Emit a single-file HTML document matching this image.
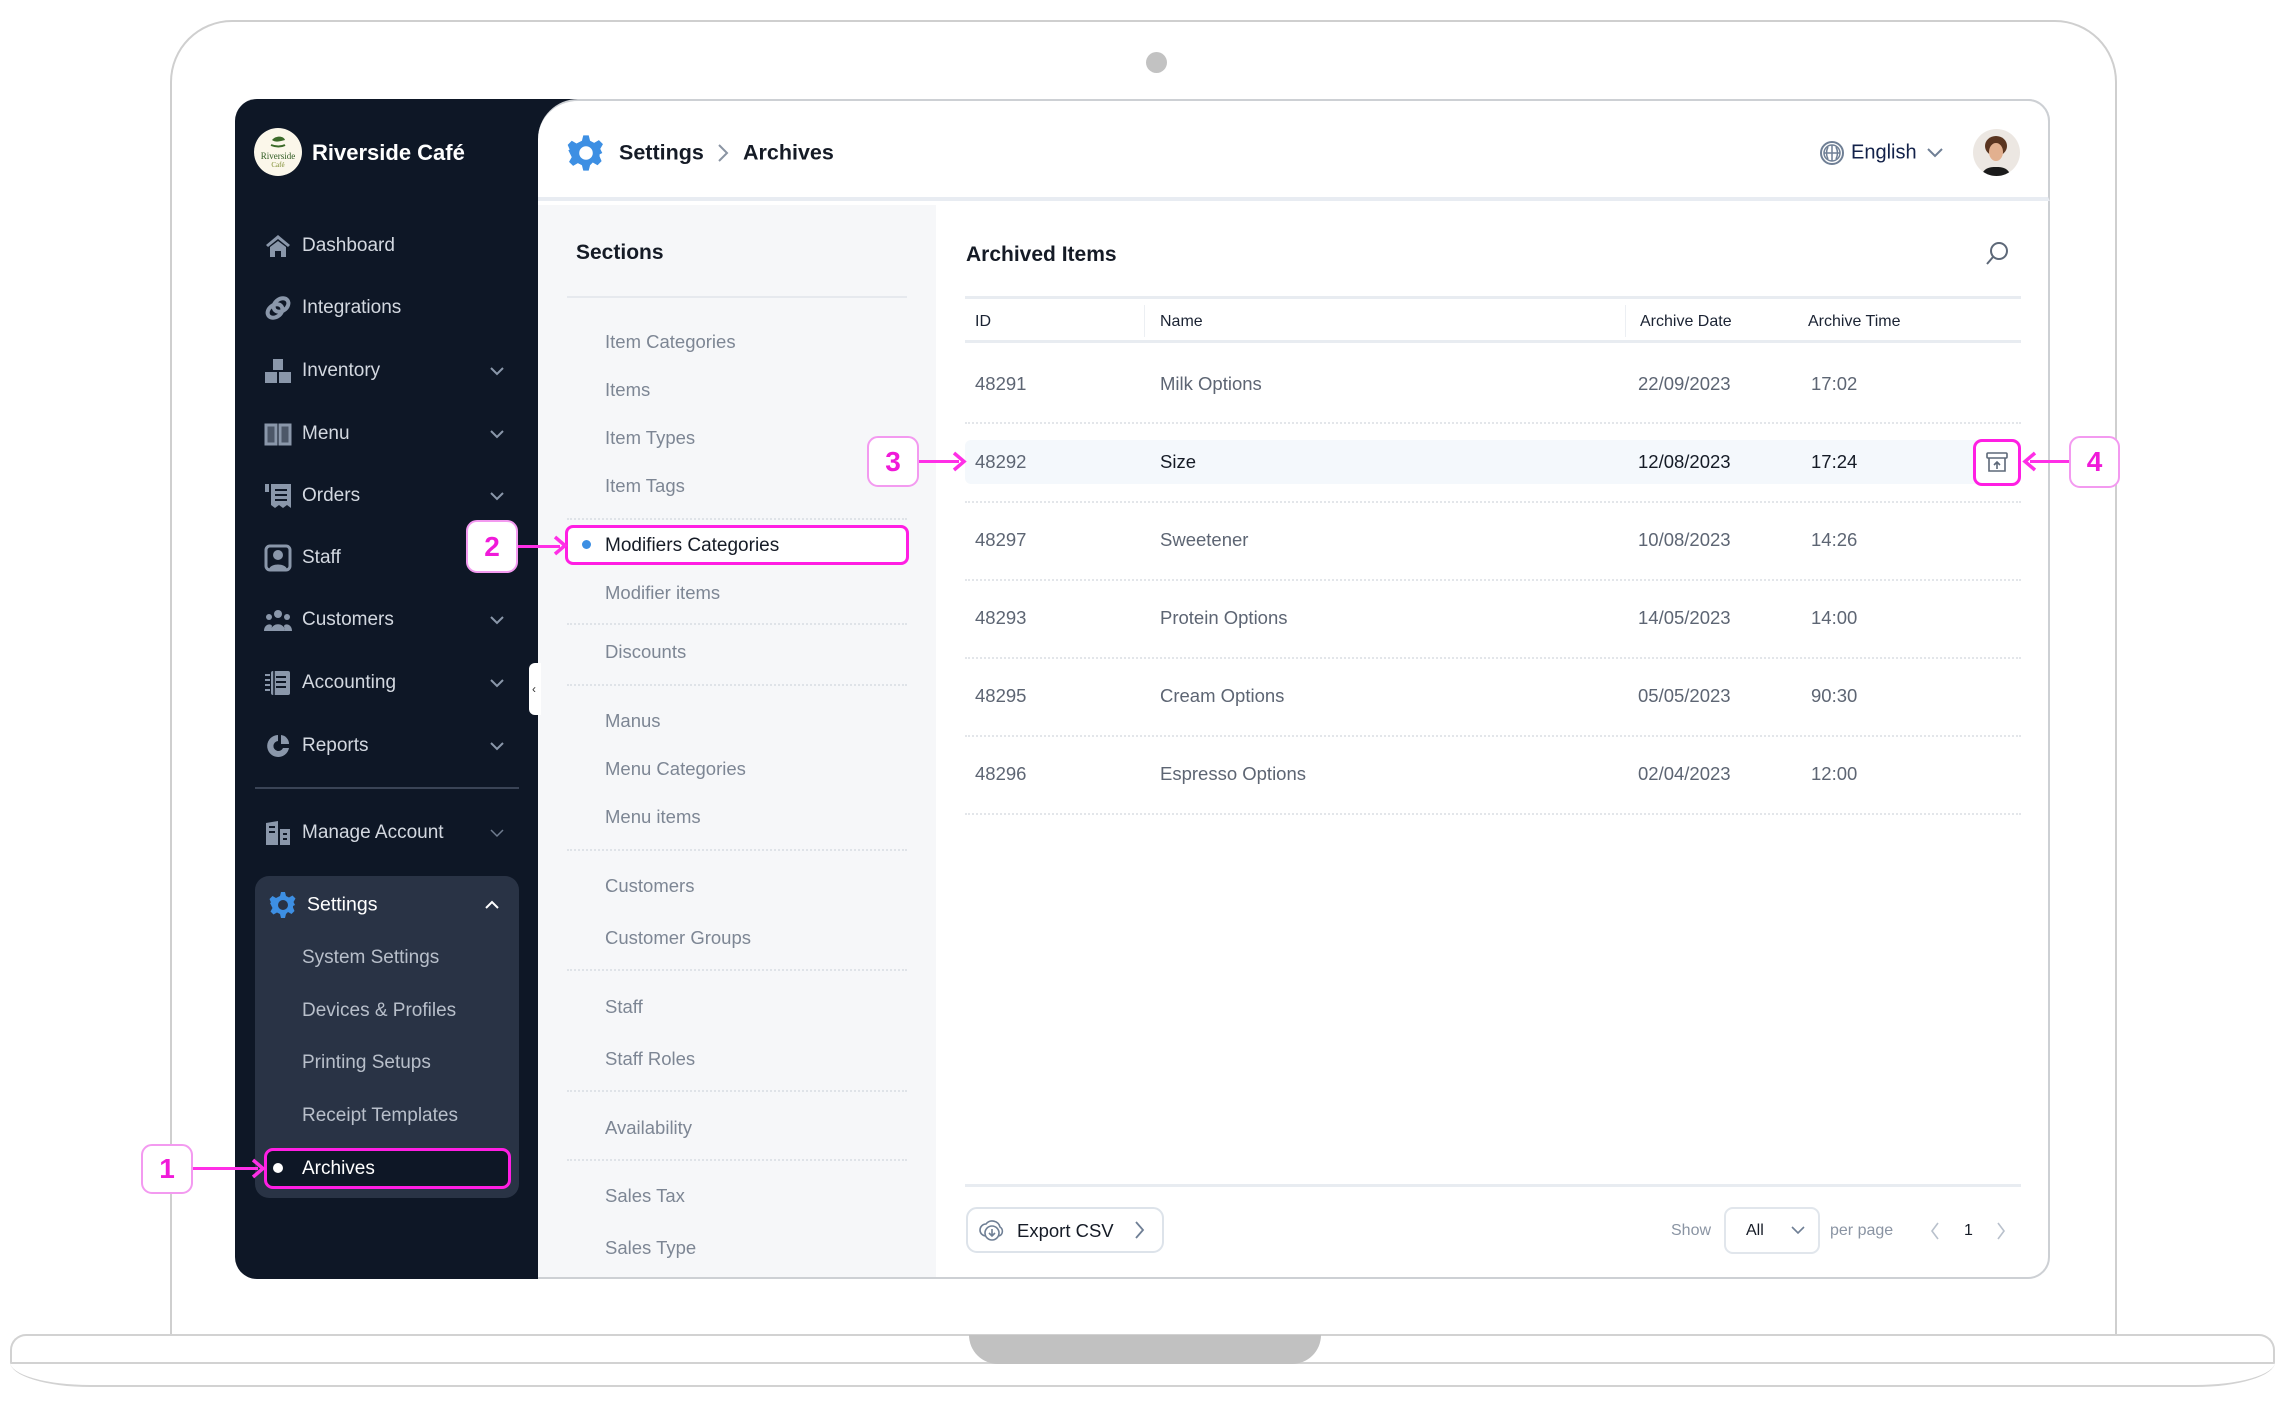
<!DOCTYPE html>
<html><head><meta charset="utf-8"><style>
*{margin:0;padding:0;box-sizing:border-box}
body{width:2285px;height:1408px;background:#fff;position:relative;overflow:hidden;font-family:"Liberation Sans",sans-serif}
.a{position:absolute}
.t{position:absolute;white-space:nowrap;transform:translateY(-50%)}
.nav{color:#d3d8e0;font-size:19px;left:302px}
.ic{position:absolute;left:264px;width:28px;height:28px;transform:translateY(-50%)}
.chev{position:absolute;left:489px;width:16px;height:10px;transform:translateY(-50%)}
.sec{color:#7d8694;font-size:18.5px;left:605px}
.dot{position:absolute;left:567px;width:340px;border-top:2px dotted #dfe3e8}
.rdot{position:absolute;left:965px;width:1056px;border-top:2px dotted #e3e6ea}
.cell{color:#5d6573;font-size:18.5px}
.lbl{position:absolute;border:2.5px solid #f39af0;border-radius:11px;background:#fff;color:#f01ad9;font-weight:bold;font-size:28px;display:flex;align-items:center;justify-content:center}
.arr{position:absolute;height:3px;background:#ff2fe6}
</style></head><body>

<!-- laptop -->
<div class="a" style="left:170px;top:20px;width:1947px;height:1330px;border:2px solid #cfcfcf;border-bottom:none;border-radius:62px 62px 0 0"></div>
<div class="a" style="left:1146px;top:52px;width:21px;height:21px;border-radius:50%;background:#c2c2c2"></div>
<div class="a" style="left:10px;top:1334px;width:2265px;height:29px;border:2px solid #d2d2d2;border-bottom:none;border-radius:16px 16px 0 0;background:#fff"></div>
<div class="a" style="left:10px;top:1362px;width:2265px;height:25px;border-bottom:2px solid #d2d2d2;border-radius:0 0 80px 80px/0 0 25px 25px;border-top:2px solid #d2d2d2"></div>
<div class="a" style="left:969px;top:1335px;width:352px;height:29px;background:#c1c1c1;border-radius:0 0 30px 30px"></div>

<!-- screen -->
<div class="a" style="left:235px;top:99px;width:1815px;height:1180px;border:2px solid #cdd0d4;border-radius:22px;overflow:hidden;background:#fff">
</div>
<div class="a" style="left:235px;top:99px;width:303px;height:1180px;background:#0e1726;border-radius:22px 0 0 22px"></div>
<div class="a" style="left:536px;top:99px;width:50px;height:50px;background:#0e1726"></div>
<div class="a" style="left:538px;top:99px;width:1512px;height:102px;background:#fff;border-radius:40px 22px 0 0;border-bottom:4px solid #e8ecf2;border-top:2px solid #cdd0d4;border-right:2px solid #cdd0d4"></div>
<div class="a" style="left:538px;top:205px;width:398px;height:1072px;background:#f6f7f9"></div>
<div class="a" style="left:529px;top:663px;width:12px;height:52px;background:#fff;border-radius:6px 0 0 6px"></div>
<div class="t" style="left:532px;top:689px;font-size:12px;color:#333">‹</div>

<!-- sidebar -->
<div class="a" style="left:254px;top:128px;width:48px;height:48px;border-radius:50%;background:#fbf7ea;overflow:hidden">
<svg width="48" height="48"><path d="M18 12c4-5 12-4 13 0-4 1-9 3-13 0z" fill="#3c6b2a"/><path d="M17 17c5 2 10 2 14 0" stroke="#3c6b2a" stroke-width="2" fill="none"/><text x="24" y="31" font-size="9" text-anchor="middle" fill="#2f5b22" font-family="Liberation Serif">Riverside</text><text x="24" y="39" font-size="7" text-anchor="middle" fill="#7a8a2a" font-family="Liberation Serif">Café</text></svg></div>
<div class="t" style="left:312px;top:153px;color:#fff;font-size:22px;font-weight:bold">Riverside Café</div>

<svg class="ic" style="top:246px" viewBox="0 0 28 28"><path d="M2 13L14 3l12 10-2 2-10-8-10 8z M6 15l8-6 8 6v10h-5v-6h-6v6H6z" fill="#8a97aa"/></svg>
<div class="t nav" style="top:246px">Dashboard</div>
<svg class="ic" style="top:308px" viewBox="0 0 28 28"><ellipse cx="11" cy="17" rx="8" ry="6" transform="rotate(-35 11 17)" stroke="#8a97aa" stroke-width="4" fill="none"/><ellipse cx="17" cy="11" rx="8" ry="6" transform="rotate(-35 17 11)" stroke="#8a97aa" stroke-width="4" fill="none"/></svg>
<div class="t nav" style="top:308px">Integrations</div>
<svg class="ic" style="top:371px" viewBox="0 0 28 28"><rect x="9" y="2" width="10" height="11" fill="#8a97aa"/><rect x="1" y="15" width="12" height="11" fill="#8a97aa"/><rect x="15" y="15" width="12" height="11" fill="#8a97aa"/></svg>
<div class="t nav" style="top:371px">Inventory</div>
<svg class="chev" style="top:371px" viewBox="0 0 16 10"><path d="M2 2l6 6 6-6" stroke="#8a97aa" stroke-width="2" fill="none"/></svg>
<svg class="ic" style="top:434px" viewBox="0 0 28 28"><path d="M2 5h10v19H2z M16 5h10v19H16z" stroke="#8a97aa" stroke-width="3" fill="#8a97aa" fill-opacity=".5"/></svg>
<div class="t nav" style="top:434px">Menu</div>
<svg class="chev" style="top:434px" viewBox="0 0 16 10"><path d="M2 2l6 6 6-6" stroke="#8a97aa" stroke-width="2" fill="none"/></svg>
<svg class="ic" style="top:496px" viewBox="0 0 28 28"><rect x="1" y="2" width="4" height="8" fill="#8a97aa"/><path d="M7 2h20v24l-4-3-4 3-4-3-4 3-4-3z" fill="#8a97aa"/><path d="M11 8h12M11 13h12M11 18h12" stroke="#0e1726" stroke-width="2"/></svg>
<div class="t nav" style="top:496px">Orders</div>
<svg class="chev" style="top:496px" viewBox="0 0 16 10"><path d="M2 2l6 6 6-6" stroke="#8a97aa" stroke-width="2" fill="none"/></svg>
<svg class="ic" style="top:558px" viewBox="0 0 28 28"><rect x="2" y="2" width="24" height="24" rx="4" stroke="#8a97aa" stroke-width="3" fill="none"/><circle cx="14" cy="11" r="5" fill="#8a97aa"/><path d="M5 25c2-6 16-6 18 0z" fill="#8a97aa"/></svg>
<div class="t nav" style="top:558px">Staff</div>
<svg class="ic" style="top:620px" viewBox="0 0 28 28"><circle cx="14" cy="8" r="4" fill="#8a97aa"/><circle cx="5" cy="11" r="3" fill="#8a97aa"/><circle cx="23" cy="11" r="3" fill="#8a97aa"/><path d="M7 25c0-9 14-9 14 0zM0 25c0-7 7-8 8-5l-1 5zM28 25c0-7-7-8-8-5l1 5z" fill="#8a97aa"/></svg>
<div class="t nav" style="top:620px">Customers</div>
<svg class="chev" style="top:620px" viewBox="0 0 16 10"><path d="M2 2l6 6 6-6" stroke="#8a97aa" stroke-width="2" fill="none"/></svg>
<svg class="ic" style="top:683px" viewBox="0 0 28 28"><rect x="7" y="2" width="19" height="24" rx="2" fill="#8a97aa"/><path d="M1 6h5M1 11h5M1 16h5M1 21h5" stroke="#8a97aa" stroke-width="2"/><path d="M12 8h10M12 13h10M12 18h10" stroke="#0e1726" stroke-width="2"/><path d="M10 2v24" stroke="#0e1726" stroke-width="1.5"/></svg>
<div class="t nav" style="top:683px">Accounting</div>
<svg class="chev" style="top:683px" viewBox="0 0 16 10"><path d="M2 2l6 6 6-6" stroke="#8a97aa" stroke-width="2" fill="none"/></svg>
<svg class="ic" style="top:746px" viewBox="0 0 28 28"><path d="M14 3A11 11 0 1 0 25 16h-6a5 5 0 1 1-5-7z" fill="#8a97aa"/><path d="M17 3a9 9 0 0 1 8 9h-8z" fill="#8a97aa"/></svg>
<div class="t nav" style="top:746px">Reports</div>
<svg class="chev" style="top:746px" viewBox="0 0 16 10"><path d="M2 2l6 6 6-6" stroke="#8a97aa" stroke-width="2" fill="none"/></svg>

<div class="a" style="left:255px;top:787px;width:264px;height:2px;background:#3a4456"></div>
<svg class="ic" style="top:833px" viewBox="0 0 28 28"><path d="M2 4l12-2v24H2z" fill="#8a97aa"/><path d="M16 10h10v16H16z" fill="#8a97aa"/><path d="M5 8h6M5 13h6M19 15h4M19 20h4" stroke="#0e1726" stroke-width="2"/></svg>
<div class="t nav" style="top:833px">Manage Account</div>
<svg class="chev" style="top:833px" viewBox="0 0 16 10"><path d="M2 2l6 6 6-6" stroke="#6f7c8f" stroke-width="1.5" fill="none"/></svg>

<div class="a" style="left:255px;top:876px;width:264px;height:322px;background:#293345;border-radius:14px"></div>
<svg class="a" style="left:269px;top:891px" width="28" height="28" viewBox="0 0 28 28"><path d="M12 1h4l1 4 3 1.5 3.5-2 3 3-2 3.5L26 14l-2 1-0 1.5 1.5 3.5-3 3-3.5-2L17 23l-1 4h-4l-1-4-3-1.5-3.5 2-3-3 2-3.5L2 14l-1-2 1-0.5L0.5 8l3-3 3.5 2L11 5z" fill="#3d8fe3"/><circle cx="14" cy="14" r="5" fill="#293345"/></svg>
<div class="t" style="left:307px;top:905px;color:#fff;font-size:19.5px">Settings</div>
<svg class="chev" style="top:905px;left:484px" viewBox="0 0 16 10"><path d="M2 8l6-6 6 6" stroke="#fff" stroke-width="2" fill="none"/></svg>
<div class="t nav" style="top:958px;color:#b8bfca">System Settings</div>
<div class="t nav" style="top:1011px;color:#b8bfca">Devices &amp; Profiles</div>
<div class="t nav" style="top:1063px;color:#b8bfca">Printing Setups</div>
<div class="t nav" style="top:1116px;color:#b8bfca">Receipt Templates</div>
<div class="a" style="left:264px;top:1148px;width:247px;height:41px;background:#0e1726;border:3px solid #ff1ee3;border-radius:9px"></div>
<div class="a" style="left:273px;top:1163px;width:10px;height:10px;border-radius:50%;background:#fff"></div>
<div class="t" style="left:302px;top:1169px;color:#fff;font-size:19px">Archives</div>

<!-- header -->
<svg class="a" style="left:567px;top:134px" width="38" height="38" viewBox="0 0 28 28"><path d="M12 1h4l1 4 3 1.5 3.5-2 3 3-2 3.5L26 14l-2 1-0 1.5 1.5 3.5-3 3-3.5-2L17 23l-1 4h-4l-1-4-3-1.5-3.5 2-3-3 2-3.5L2 14l-1-2 1-0.5L0.5 8l3-3 3.5 2L11 5z" fill="#3d8fe3"/><circle cx="14" cy="14" r="5" fill="#fff"/></svg>
<div class="t" style="left:619px;top:153px;font-size:21.5px;font-weight:bold;color:#151b26">Settings</div>
<svg class="a" style="left:716px;top:143px" width="14" height="20"><path d="M3 2l8 8-8 8" stroke="#8a94a3" stroke-width="2" fill="none"/></svg>
<div class="t" style="left:743px;top:153px;font-size:21.5px;font-weight:bold;color:#151b26">Archives</div>
<svg class="a" style="left:1819px;top:140px" width="26" height="26" viewBox="0 0 26 26"><circle cx="13" cy="13" r="11" stroke="#6f7f95" stroke-width="2" fill="none"/><circle cx="13" cy="13" r="8" stroke="#6f7f95" stroke-width="1.5" fill="none"/><path d="M5 13h16M13 5v16M9 7c-2 4-2 8 0 12M17 7c2 4 2 8 0 12" stroke="#6f7f95" stroke-width="1.5" fill="none"/></svg>
<div class="t" style="left:1851px;top:153px;font-size:20px;color:#13224a">English</div>
<svg class="a" style="left:1926px;top:147px" width="18" height="12"><path d="M2 2l7 7 7-7" stroke="#6f7f95" stroke-width="2" fill="none"/></svg>
<div class="a" style="left:1973px;top:129px;width:47px;height:47px;border-radius:50%;background:#ece7e2;overflow:hidden">
<svg width="47" height="47"><ellipse cx="23" cy="17" rx="11" ry="10" fill="#5a3520"/><ellipse cx="23" cy="23" rx="7" ry="9" fill="#e2b08f"/><path d="M8 47c3-8 8-9 15-9s12 1 15 9z" fill="#1b1b1b"/></svg></div>

<!-- sections -->
<div class="t" style="left:576px;top:253px;font-size:21px;font-weight:bold;color:#151b26">Sections</div>
<div class="a" style="left:567px;top:296px;width:340px;height:2px;background:#e6e9ee"></div>
<div class="t sec" style="top:342px">Item Categories</div>
<div class="t sec" style="top:390px">Items</div>
<div class="t sec" style="top:438px">Item Types</div>
<div class="t sec" style="top:486px">Item Tags</div>
<div class="dot" style="top:518px"></div>
<div class="a" style="left:565px;top:525px;width:344px;height:40px;background:#fff;border:3px solid #ff1ee3;border-radius:8px"></div>
<div class="a" style="left:582px;top:540px;width:9px;height:9px;border-radius:50%;background:#3d8fe3"></div>
<div class="t" style="left:605px;top:546px;font-size:19px;color:#151b26">Modifiers Categories</div>
<div class="t sec" style="top:593px">Modifier items</div>
<div class="dot" style="top:623px"></div>
<div class="t sec" style="top:652px">Discounts</div>
<div class="dot" style="top:684px"></div>
<div class="t sec" style="top:721px">Manus</div>
<div class="t sec" style="top:769px">Menu Categories</div>
<div class="t sec" style="top:817px">Menu items</div>
<div class="dot" style="top:849px"></div>
<div class="t sec" style="top:886px">Customers</div>
<div class="t sec" style="top:938px">Customer Groups</div>
<div class="dot" style="top:969px"></div>
<div class="t sec" style="top:1007px">Staff</div>
<div class="t sec" style="top:1059px">Staff Roles</div>
<div class="dot" style="top:1090px"></div>
<div class="t sec" style="top:1128px">Availability</div>
<div class="dot" style="top:1159px"></div>
<div class="t sec" style="top:1196px">Sales Tax</div>
<div class="t sec" style="top:1248px">Sales Type</div>

<!-- content -->
<div class="t" style="left:966px;top:255px;font-size:21px;font-weight:bold;color:#151b26">Archived Items</div>
<svg class="a" style="left:1984px;top:240px" width="26" height="28"><circle cx="15" cy="11" r="8" stroke="#5d6878" stroke-width="2" fill="none"/><path d="M9 17l-6 7" stroke="#5d6878" stroke-width="2"/></svg>
<div class="a" style="left:965px;top:296px;width:1056px;height:3px;background:#e8ecf1"></div>
<div class="a" style="left:1144px;top:305px;width:1px;height:32px;background:#eceff3"></div>
<div class="a" style="left:1625px;top:305px;width:1px;height:32px;background:#eceff3"></div>
<div class="t" style="left:975px;top:322px;font-size:16px;color:#1b2333">ID</div>
<div class="t" style="left:1160px;top:322px;font-size:16px;color:#1b2333">Name</div>
<div class="t" style="left:1640px;top:322px;font-size:16px;color:#1b2333">Archive Date</div>
<div class="t" style="left:1808px;top:322px;font-size:16px;color:#1b2333">Archive Time</div>
<div class="a" style="left:965px;top:340px;width:1056px;height:3px;background:#e8ecf1"></div>

<div class="a" style="left:965px;top:440px;width:1056px;height:44px;background:#f4f8fc;border-radius:6px"></div>

<div class="t cell" style="left:975px;top:384px">48291</div><div class="t cell" style="left:1160px;top:384px">Milk Options</div><div class="t cell" style="left:1638px;top:384px">22/09/2023</div><div class="t cell" style="left:1811px;top:384px">17:02</div>
<div class="rdot" style="top:422px"></div>
<div class="t cell" style="left:975px;top:462px">48292</div><div class="t cell" style="left:1160px;top:462px;color:#151b26">Size</div><div class="t cell" style="left:1638px;top:462px;color:#151b26">12/08/2023</div><div class="t cell" style="left:1811px;top:462px;color:#151b26">17:24</div>
<div class="rdot" style="top:501px"></div>
<div class="t cell" style="left:975px;top:540px">48297</div><div class="t cell" style="left:1160px;top:540px">Sweetener</div><div class="t cell" style="left:1638px;top:540px">10/08/2023</div><div class="t cell" style="left:1811px;top:540px">14:26</div>
<div class="rdot" style="top:579px"></div>
<div class="t cell" style="left:975px;top:618px">48293</div><div class="t cell" style="left:1160px;top:618px">Protein Options</div><div class="t cell" style="left:1638px;top:618px">14/05/2023</div><div class="t cell" style="left:1811px;top:618px">14:00</div>
<div class="rdot" style="top:657px"></div>
<div class="t cell" style="left:975px;top:696px">48295</div><div class="t cell" style="left:1160px;top:696px">Cream Options</div><div class="t cell" style="left:1638px;top:696px">05/05/2023</div><div class="t cell" style="left:1811px;top:696px">90:30</div>
<div class="rdot" style="top:735px"></div>
<div class="t cell" style="left:975px;top:774px">48296</div><div class="t cell" style="left:1160px;top:774px">Espresso Options</div><div class="t cell" style="left:1638px;top:774px">02/04/2023</div><div class="t cell" style="left:1811px;top:774px">12:00</div>
<div class="rdot" style="top:813px"></div>

<div class="a" style="left:1973px;top:439px;width:48px;height:47px;border:3px solid #ff1ee3;border-radius:9px;background:#fff"></div>
<svg class="a" style="left:1985px;top:450px" width="24" height="24"><rect x="2" y="3" width="20" height="5" rx="1" stroke="#5d6878" stroke-width="1.6" fill="none"/><path d="M4 8v13h16V8M12 19v-7M9 15l3-3 3 3" stroke="#5d6878" stroke-width="1.6" fill="none"/></svg>

<div class="a" style="left:965px;top:1184px;width:1056px;height:3px;background:#e8ecf1"></div>
<div class="a" style="left:966px;top:1207px;width:198px;height:46px;border:2px solid #dde3ea;border-radius:11px"></div>
<svg class="a" style="left:979px;top:1217px" width="26" height="26"><path d="M7 19a6 6 0 0 1 0-12 8 8 0 0 1 14 3 5 5 0 0 1-1 9" stroke="#6f7f95" stroke-width="1.6" fill="none"/><circle cx="13" cy="16" r="7" stroke="#6f7f95" stroke-width="1.6" fill="#fff"/><path d="M13 12v7M10 16l3 3 3-3" stroke="#6f7f95" stroke-width="1.6" fill="none"/></svg>
<div class="t" style="left:1017px;top:1231px;font-size:18.5px;color:#151b26">Export CSV</div>
<svg class="a" style="left:1134px;top:1220px" width="12" height="20"><path d="M2 2l7 8-7 8" stroke="#6f7f95" stroke-width="1.8" fill="none"/></svg>
<div class="t" style="left:1671px;top:1231px;font-size:16px;color:#8a94a3">Show</div>
<div class="a" style="left:1724px;top:1207px;width:96px;height:47px;border:2px solid #e1e6ec;border-radius:9px"></div>
<div class="t" style="left:1746px;top:1231px;font-size:16px;color:#151b26">All</div>
<svg class="a" style="left:1790px;top:1225px" width="16" height="10"><path d="M2 2l6 6 6-6" stroke="#6f7f95" stroke-width="1.6" fill="none"/></svg>
<div class="t" style="left:1830px;top:1231px;font-size:16px;color:#8a94a3">per page</div>
<svg class="a" style="left:1929px;top:1221px" width="12" height="20"><path d="M9 2l-6 8 6 8" stroke="#b9c1cc" stroke-width="1.6" fill="none"/></svg>
<div class="t" style="left:1964px;top:1231px;font-size:16px;color:#151b26">1</div>
<svg class="a" style="left:1995px;top:1221px" width="12" height="20"><path d="M3 2l6 8-6 8" stroke="#b9c1cc" stroke-width="1.6" fill="none"/></svg>

<!-- annotations -->
<div class="lbl" style="left:141px;top:1144px;width:52px;height:50px">1</div>
<div class="arr" style="left:193px;top:1167px;width:65px"></div>
<svg class="a" style="left:250px;top:1158px" width="16" height="21"><path d="M3 2l10 8.5-10 8.5" stroke="#ff2fe6" stroke-width="3.5" fill="none"/></svg>
<div class="lbl" style="left:466px;top:520px;width:52px;height:53px">2</div>
<div class="arr" style="left:518px;top:545px;width:42px"></div>
<svg class="a" style="left:552px;top:535px" width="16" height="21"><path d="M3 2l10 8.5-10 8.5" stroke="#ff2fe6" stroke-width="3.5" fill="none"/></svg>
<div class="lbl" style="left:867px;top:436px;width:52px;height:51px">3</div>
<div class="arr" style="left:919px;top:460px;width:40px"></div>
<svg class="a" style="left:951px;top:451px" width="16" height="21"><path d="M3 2l10 8.5-10 8.5" stroke="#ff2fe6" stroke-width="3.5" fill="none"/></svg>
<div class="lbl" style="left:2069px;top:436px;width:51px;height:52px">4</div>
<div class="arr" style="left:2030px;top:460px;width:39px"></div>
<svg class="a" style="left:2022px;top:451px" width="16" height="21"><path d="M13 2L3 10.5 13 19" stroke="#ff2fe6" stroke-width="3.5" fill="none"/></svg>
</body></html>
